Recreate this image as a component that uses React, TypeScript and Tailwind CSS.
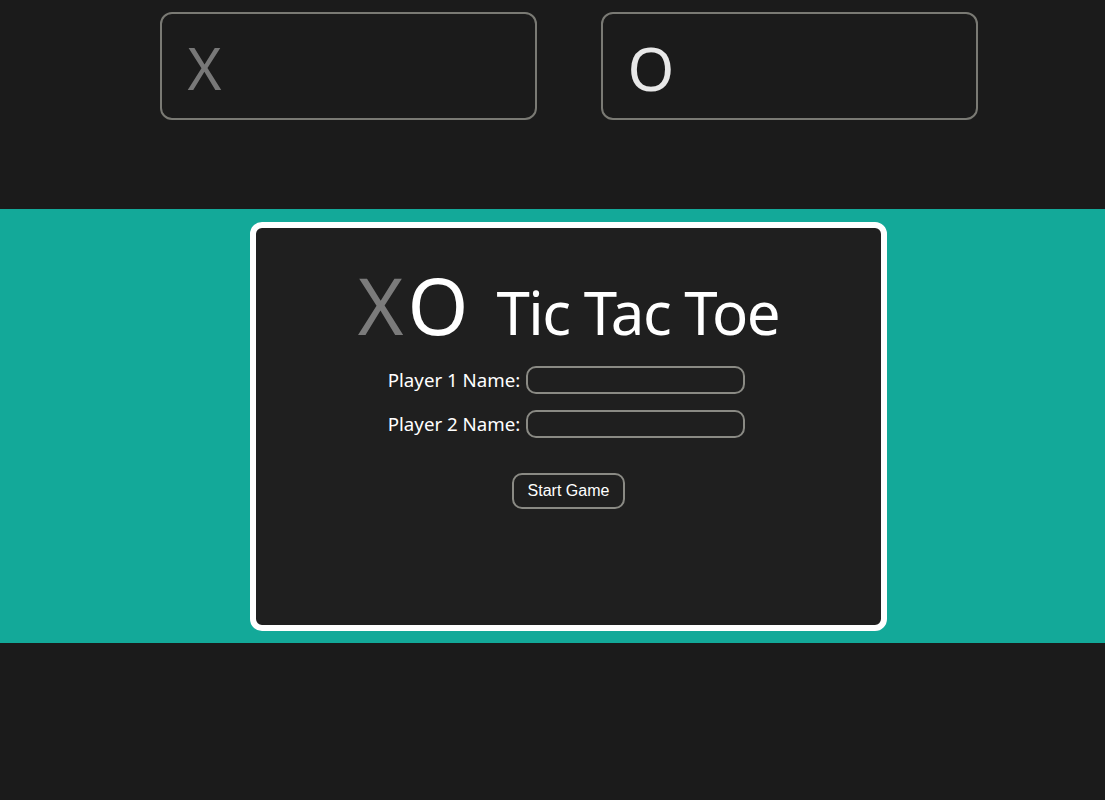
import React, { useState } from "react";

export default function App() {
  const [p1, setP1] = useState("");
  const [p2, setP2] = useState("");

  return (
    <div className="min-h-[800px] bg-[#1b1b1b] text-white" style={{ fontFamily: "'Noto Sans', 'Open Sans', sans-serif" }}>
      <div className="h-[209px] flex justify-center gap-[64px] pt-[12px] pl-[32px]">
        <div className="w-[377px] h-[108px] border-2 border-[#7a7a74] rounded-[12px] flex items-center pl-[26px]">
          <span className="text-[58px] leading-none text-[#787878] mt-[4px]">X</span>
        </div>
        <div className="w-[377px] h-[108px] border-2 border-[#7a7a74] rounded-[12px] flex items-center pl-[25px]">
          <span className="text-[60px] leading-none text-[#e8e8e8] mt-[4px]">O</span>
        </div>
      </div>

      <div className="h-[434px] bg-[#13a999] flex justify-center items-center pl-[32px]">
        <div className="w-[637px] h-[409px] bg-[#1f1f1f] border-[6px] border-white rounded-[12px] flex flex-col items-center">
          <div className="flex items-baseline mt-[38px] h-[92px]">
            <span className="text-[78px] leading-none text-[#7b7b7b] tracking-[-2px]">X</span>
            <span className="text-[78px] leading-none text-white ml-[6px]">O</span>
            <span className="text-[60px] leading-none text-white ml-[28px] tracking-[-1.5px]">Tic Tac Toe</span>
          </div>
          <div className="flex flex-col gap-[16px] mt-[8px]">
            <label className="flex items-center gap-[6px] text-[18.7px] -ml-[4px]">
              Player 1 Name:
              <input
                value={p1}
                onChange={(e) => setP1(e.target.value)}
                className="w-[219px] h-[28px] bg-[#1f1f1f] border-2 border-[#8a8a84] rounded-[10px] outline-none px-2 text-white"
              />
            </label>
            <label className="flex items-center gap-[6px] text-[18.7px] -ml-[4px]">
              Player 2 Name:
              <input
                value={p2}
                onChange={(e) => setP2(e.target.value)}
                className="w-[219px] h-[28px] bg-[#1f1f1f] border-2 border-[#8a8a84] rounded-[10px] outline-none px-2 text-white"
              />
            </label>
          </div>
          <button
            className="mt-[35px] w-[113px] h-[36px] border-2 border-[#8a8a84] rounded-[10px] text-[16px] text-white bg-[#1f1f1f]"
            style={{ fontFamily: "'Liberation Sans', Arial, sans-serif" }}
          >
            Start Game
          </button>
        </div>
      </div>
    </div>
  );
}
